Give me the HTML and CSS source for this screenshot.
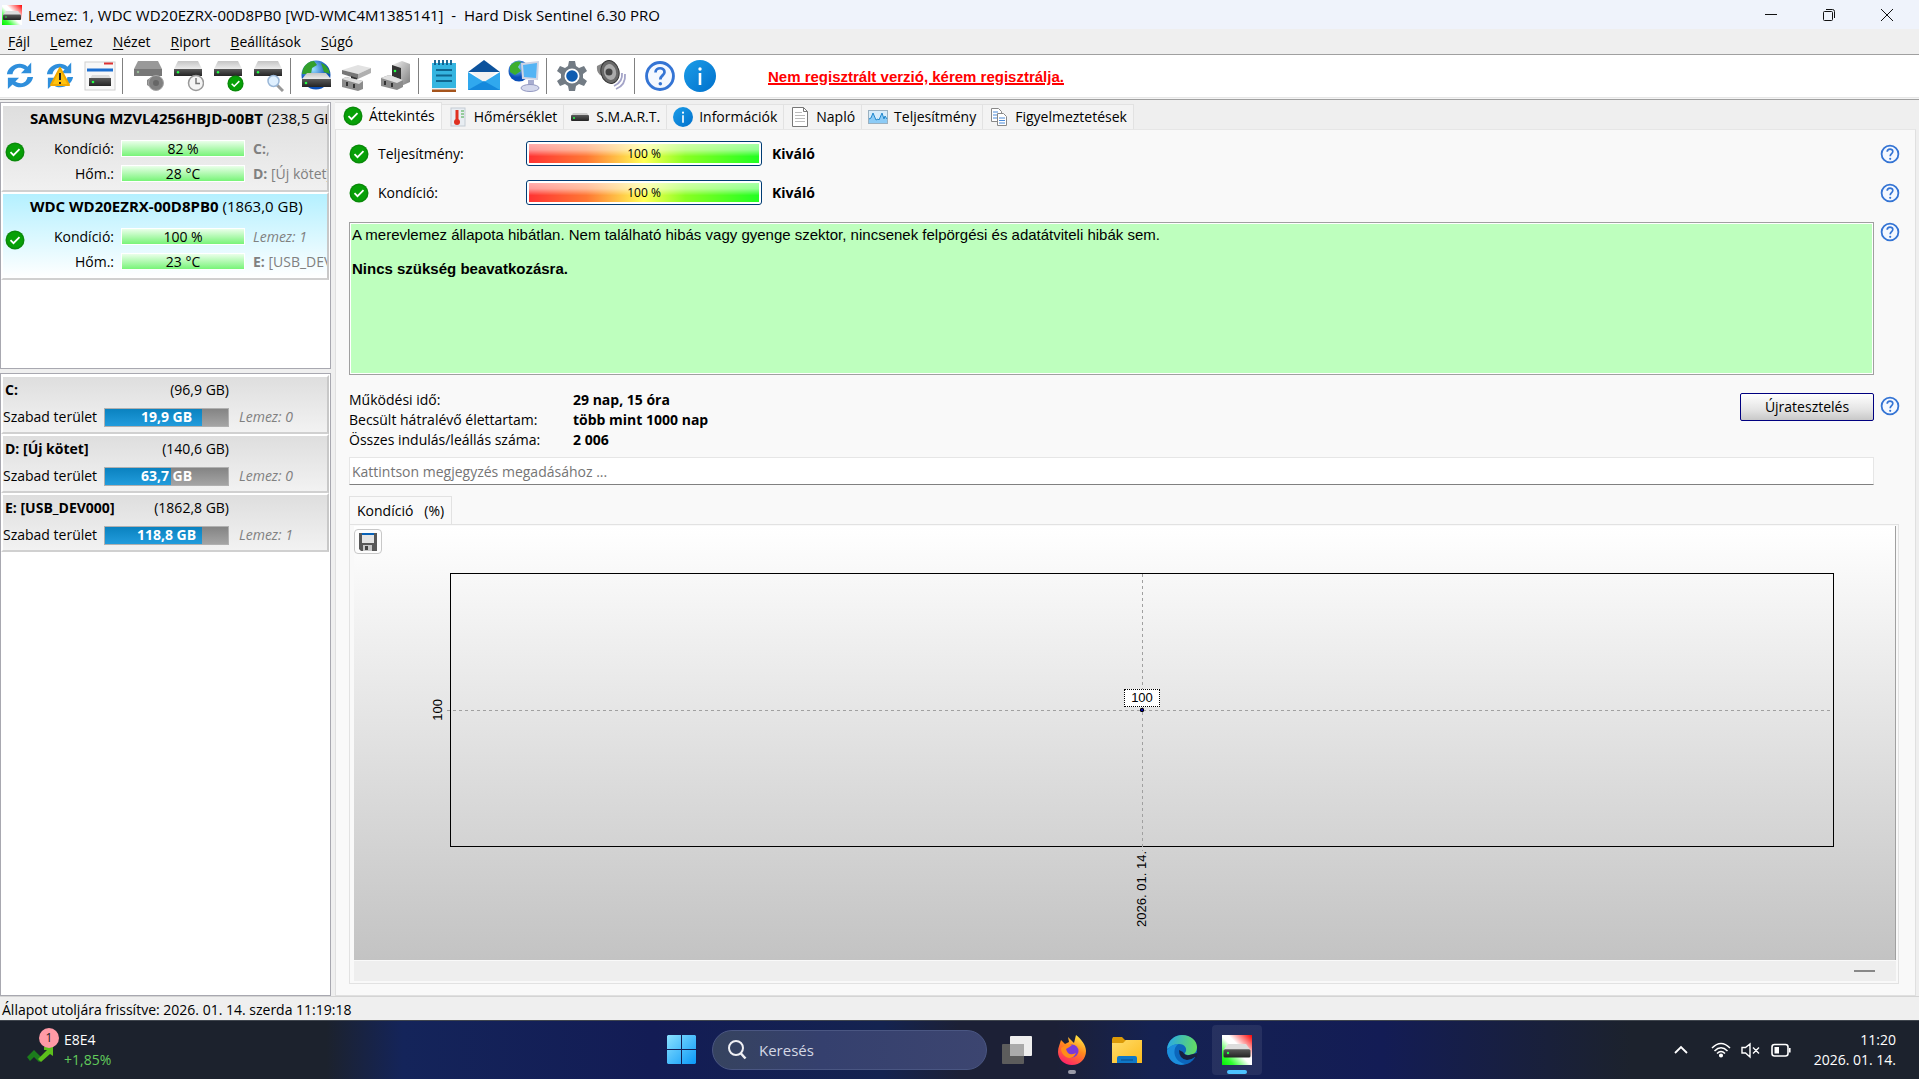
FILE: index.html
```html
<!DOCTYPE html>
<html lang="hu">
<head>
    <meta charset="UTF-8">
    <meta name="viewport" content="width=device-width, initial-scale=1.0">
    <title>Hard Disk Sentinel</title>
    <link rel="stylesheet" href="styles.css">
</head>
<body>
    <!-- Shared icons -->
    <svg class="sprite" aria-hidden="true">
        <defs>
            <linearGradient id="driveTop" x1="0" y1="0" x2="0" y2="1"><stop offset="0" stop-color="#c4c4c4"/><stop offset="1" stop-color="#ececec"/></linearGradient>
            <linearGradient id="driveFront" x1="0" y1="0" x2="0" y2="1"><stop offset="0" stop-color="#5a5a5a"/><stop offset="1" stop-color="#242424"/></linearGradient>
            <linearGradient id="appBg" x1="0" y1="1" x2="1" y2="0"><stop offset="0" stop-color="#0e0"/><stop offset=".2" stop-color="#3f3"/><stop offset=".48" stop-color="#fff"/><stop offset=".6" stop-color="#fff"/><stop offset="1" stop-color="#f00"/></linearGradient>
            <linearGradient id="blueFill" x1="0" y1="0" x2="1" y2="1"><stop offset="0" stop-color="#1c9de8"/><stop offset="1" stop-color="#0070cc"/></linearGradient>
            <linearGradient id="metal" x1="0" y1="0" x2="1" y2="1"><stop offset="0" stop-color="#f2f2f2"/><stop offset="1" stop-color="#7c7c7c"/></linearGradient>
            <radialGradient id="globeFill" cx=".4" cy=".3"><stop offset="0" stop-color="#9be0ff"/><stop offset="1" stop-color="#0a4fb8"/></radialGradient>
            <linearGradient id="winFill" x1="0" y1="0" x2="1" y2="1"><stop offset="0" stop-color="#8be2ff"/><stop offset="1" stop-color="#0a98f8"/></linearGradient>
            <linearGradient id="foxFill" x1=".8" y1="0" x2=".3" y2="1"><stop offset="0" stop-color="#fff04a"/><stop offset=".45" stop-color="#ff8a1c"/><stop offset="1" stop-color="#ff1f6b"/></linearGradient>
            <linearGradient id="edgeTop" x1="0" y1=".3" x2="1" y2=".4"><stop offset="0" stop-color="#29a8e8"/><stop offset="1" stop-color="#63dc62"/></linearGradient>
            <linearGradient id="folderFill" x1="0" y1="0" x2="1" y2="1"><stop offset="0" stop-color="#ffdc6b"/><stop offset="1" stop-color="#fcbb1c"/></linearGradient>
        </defs>
        <symbol id="ok" viewBox="0 0 20 20">
            <circle cx="10" cy="10" r="9.5" fill="#0a8a0a"/><circle cx="10" cy="10" r="8" fill="#07a007"/>
            <path d="M5.5 10.2l3 3 6-6" fill="none" stroke="#fff" stroke-width="1.8"/>
        </symbol>
        <symbol id="help" viewBox="0 0 20 20">
            <circle cx="10" cy="10" r="8.4" fill="#f4f8ff" stroke="#3474d4" stroke-width="1.8"/>
            <path d="M7.2 7.8c0-3.6 5.8-3.4 5.6-.2 0 2-2.6 2.1-2.6 4.6" fill="none" stroke="#3474d4" stroke-width="1.7"/>
            <circle cx="10.2" cy="14.8" r="1.1" fill="#3474d4"/>
        </symbol>
        <symbol id="info" viewBox="0 0 32 32">
            <circle cx="16" cy="16" r="16" fill="url(#blueFill)"/>
            <circle cx="16" cy="9" r="1.7" fill="#fff"/><path d="M16 13v12" stroke="#fff" stroke-width="2.6"/>
        </symbol>
        <symbol id="drive" viewBox="0 0 28 15">
            <path d="M4 0h20l4 8H0z" fill="url(#driveTop)"/><path d="M0 8h28v7H0z" fill="url(#driveFront)"/>
            <circle cx="4" cy="11.3" r="1.2" fill="#2f4"/>
        </symbol>
        <symbol id="app" viewBox="0 0 20 20">
            <path d="M0 0h20v20H0z" fill="url(#appBg)"/><path d="M4 6h12l3 4H1z" fill="#ddd"/>
            <rect x="1" y="9.5" width="18" height="5.500" rx="1" fill="url(#driveFront)"/><circle cx="4" cy="12" r=".8" fill="#2f4"/>
        </symbol>
        <symbol id="sync" viewBox="0 0 30 30">
            <g fill="#2f8fdc"><path d="M1 13C2 4 15-2 23 5l4-4.500V12H16l4-4C14 4 8 7 7 13z"/><path d="M29 16C28 25 15 31 7 24l-5 5V17h12l-4 4c6 4 12 1 13-5z"/></g>
        </symbol>
    </svg>

    <header class="titlebar">
        <svg class="app-icon"><use href="#app"/></svg>
        <span class="caption">Lemez: 1, WDC WD20EZRX-00D8PB0 [WD-WMC4M1385141]&nbsp; -&nbsp; Hard Disk Sentinel 6.30 PRO</span>
        <button class="win-btn" aria-label="Minimalizálás"><svg viewBox="0 0 12 12"><path d="M0 5.500h12"/></svg></button>
        <button class="win-btn" aria-label="Előző méret"><svg viewBox="0 0 12 12"><rect x=".5" y="2.500" width="9" height="9" rx="1"/><path d="M3 .5h6.500q2 0 2 2V9"/></svg></button>
        <button class="win-btn" aria-label="Bezárás"><svg viewBox="0 0 12 12"><path d="M0 0l12 12M12 0L0 12"/></svg></button>
    </header>

    <nav class="menubar">
        <button><u>F</u>ájl</button>
        <button><u>L</u>emez</button>
        <button><u>N</u>ézet</button>
        <button><u>R</u>iport</button>
        <button><u>B</u>eállítások</button>
        <button><u>S</u>úgó</button>
    </nav>

    <div class="toolbar">
        <button aria-label="Frissítés"><svg viewBox="0 0 32 32"><use href="#sync" x="2" y="2" width="28" height="28"/></svg></button>
        <button aria-label="Frissítés figyelmeztetéssel"><svg viewBox="0 0 32 32"><use href="#sync" x="2" y="2" width="28" height="28"/><path d="M16 8l9 17H7z" fill="#ffc20e" stroke="#f0a800" stroke-linejoin="round" stroke-width="2"/><path d="M16 13v7m0 2v2" stroke="#222" stroke-width="2"/></svg></button>
        <button aria-label="Ablak"><svg viewBox="0 0 32 32"><rect x="1" y="2" width="30" height="28" fill="#f8f8f8" stroke="#d0d0d0"/><path d="M3 10h26" stroke="#1d6fd0" stroke-width="3"/><path d="M20 3.500h9" stroke="#d33" stroke-width="2"/><path d="M8 15h17l2 4H6z" fill="#ddd"/><path d="M5 18h22v8H5z" fill="url(#driveFront)"/><circle cx="9" cy="22" r="1.300" fill="#2f4"/></svg></button>
        <span class="sep"></span>
        <button aria-label="Hangteszt"><svg viewBox="0 0 32 32"><path d="M6 1h20l4 8H2z" fill="#999"/><path d="M2 9h28v7H2z" fill="#777"/><circle cx="6" cy="12" r="1.200" fill="#9b9"/><path d="M15 20l6-4v13l-6-4z" fill="#888"/><circle cx="24" cy="23" r="7.500" fill="#808080" stroke="#a8a8a8"/><circle cx="24" cy="23" r="3" fill="#666"/></svg></button>
        <button aria-label="Ütemezés"><svg viewBox="0 0 32 32"><use href="#drive" x="2" y="1" width="28" height="15"/><circle cx="24" cy="23" r="7.500" fill="#f4f4f4" stroke="#999" stroke-width="1.500"/><path d="M24 18v5.500h4" fill="none" stroke="#777" stroke-width="1.500"/></svg></button>
        <button aria-label="Lemez rendben"><svg viewBox="0 0 32 32"><use href="#drive" x="2" y="1" width="28" height="15"/><use href="#ok" x="15" y="15" width="17" height="17"/></svg></button>
        <button aria-label="Lemez keresése"><svg viewBox="0 0 32 32"><use href="#drive" x="2" y="1" width="28" height="15"/><path d="M25 25l6 6" stroke="#999" stroke-width="3"/><circle cx="21.500" cy="21" r="5.500" fill="#dff0ff" stroke="#9bb8d8" stroke-width="1.500"/></svg></button>
        <span class="sep"></span>
        <button aria-label="Hálózati lemez"><svg viewBox="0 0 32 32"><circle cx="16" cy="15" r="14.500" fill="url(#globeFill)"/><path d="M3 9q4-8 11-8l3 4-5 3-1 6H2zM21 3q8 3 9 11l-6-2z" fill="#33a02c"/><path d="M7 13h19l5 6H2z" fill="url(#driveTop)"/><path d="M2 19h29v8H2z" fill="url(#driveFront)"/><circle cx="6" cy="23" r="1.300" fill="#2f4"/></svg></button>
        <button aria-label="Csatlakozó"><svg viewBox="0 0 32 32"><path d="M2 10l16-5 13 3-13 6z" fill="#e2e2e2"/><path d="M2 10l16 4v5L2 14z" fill="#777"/><path d="M18 14l13-6v5l-13 6z" fill="#b0b0b0"/><path d="M11 16l6 2v4h-6z" fill="#333"/><path d="M2 19l4-2 17 4v8l-5 2-16-4z" fill="#8c8c8c"/><path d="M2 19l4-2 17 4-4 3z" fill="#e0e0e0"/><path d="M7 22v4M14 24v4" stroke="#333" stroke-width="2"/></svg></button>
        <button aria-label="Dokkoló"><svg viewBox="0 0 32 32"><path d="M12 5l10-4 8 3v18l-9 4-9-6z" fill="url(#metal)"/><path d="M12 5l9 3v12l-9-4z" fill="#333"/><circle cx="15" cy="11" r="1.300" fill="#2f4"/><path d="M1 18l8-3 14 5v7l-6 3-16-4z" fill="#8c8c8c"/><path d="M1 18l8-3 14 5-6 3z" fill="#e0e0e0"/><path d="M5 21v4M12 23v4" stroke="#333" stroke-width="2"/></svg></button>
        <span class="sep"></span>
        <button aria-label="Jegyzet"><svg viewBox="0 0 32 32"><path d="M4 3h24v26H4z" fill="#35b5e0"/><path d="M4 29h24v3H4z" fill="#a5541c"/><path d="M4 28h24v1.500H4z" fill="#eee"/><path d="M7 0v5m4-5v5m4-5v5m4-5v5m4-5v5" stroke="#0b5c8c" stroke-width="1.800"/><path d="M8 10h16M8 15.500h16M8 21h16" stroke="#0f668f" stroke-width="1.800"/></svg></button>
        <button aria-label="E-mail"><svg viewBox="0 0 32 32"><path d="M0 12L16 0l16 12z" fill="#0c529c"/><path d="M4 12h24L16 24z" fill="#f2f2f2"/><path d="M0 12l16 10 16-10v18H0z" fill="#30a8ee"/><path d="M0 30l16-9 16 9z" fill="#1488dc"/></svg></button>
        <button aria-label="Hálózat"><svg viewBox="0 0 32 32"><circle cx="11" cy="11" r="10.500" fill="url(#globeFill)"/><path d="M2 6q5-6 11-4l-3 5 3 4-6 4-5-3z" fill="#3caf2f"/><path d="M13 3l18-2-1 19-16-1z" fill="#d0d4e4"/><path d="M15 5l14-2-1 15-12-1z" fill="#54b4f4"/><path d="M20 20h6v5h-6z" fill="#a8aed0"/><ellipse cx="22" cy="28" rx="9" ry="3.500" fill="#d4d8ec" stroke="#9298c0"/></svg></button>
        <span class="sep"></span>
        <button aria-label="Beállítások"><svg viewBox="0 0 32 32"><path d="M13 1h6l1 5 3 2 5-2 3 5-4 3v4l4 3-3 5-5-2-3 2-1 5h-6l-1-5-3-2-5 2-3-5 4-3v-4l-4-3 3-5 5 2 3-2z" fill="#727b84"/><circle cx="16" cy="16" r="7.500" fill="#fff"/><circle cx="16" cy="16" r="5.800" fill="#0f5cb0"/></svg></button>
        <button aria-label="Hang"><svg viewBox="0 0 32 32"><path d="M1 6l6-3 5 1v14l-8-3q-4-4-3-9z" fill="#888"/><ellipse cx="14" cy="12" rx="9" ry="11.500" transform="rotate(-14 14 12)" fill="#686868" stroke="#333"/><ellipse cx="14" cy="12" rx="6" ry="8" transform="rotate(-14 14 12)" fill="#aaa"/><circle cx="13" cy="12" r="3.500" fill="#444"/><path d="M26 13q1 9-8 13M29 14q1 11-9 15" fill="none" stroke="#a4a4c8" stroke-width="1.800"/></svg></button>
        <span class="sep"></span>
        <button aria-label="Súgó"><svg viewBox="0 0 32 32"><use href="#help" width="32" height="32"/></svg></button>
        <button aria-label="Névjegy"><svg viewBox="0 0 32 32"><use href="#info" width="32" height="32"/></svg></button>
        <a class="register" href="#">Nem regisztrált verzió, kérem regisztrálja.</a>
    </div>

    <main class="workspace">
        <aside class="sidebar">
            <ul class="list disks">
                <li class="disk">
                    <div class="disk-name"><b>SAMSUNG MZVL4256HBJD-00BT</b> (238,5 GB)</div>
                    <svg class="state"><use href="#ok"/></svg>
                    <span class="label">Kondíció:</span><span class="meter">82 %</span><span class="vol"><b>C:</b>,</span>
                    <span class="label">Hőm.:</span><span class="meter">28 °C</span><span class="vol"><b>D:</b> [Új kötet]</span>
                </li>
                <li class="disk selected">
                    <div class="disk-name"><b>WDC WD20EZRX-00D8PB0</b> (1863,0 GB)</div>
                    <svg class="state"><use href="#ok"/></svg>
                    <span class="label">Kondíció:</span><span class="meter">100 %</span><span class="vol"><i>Lemez: 1</i></span>
                    <span class="label">Hőm.:</span><span class="meter">23 °C</span><span class="vol"><b>E:</b> [USB_DEV000]</span>
                </li>
            </ul>
            <ul class="list volumes">
                <li class="volume">
                    <div class="volume-head"><b>C:</b><span>(96,9 GB)</span></div>
                    <div class="volume-space"><span>Szabad terület</span><span class="space"><span class="used" style="width: 79%"></span><b>19,9 GB</b></span><i>Lemez: 0</i></div>
                </li>
                <li class="volume">
                    <div class="volume-head"><b>D: [Új kötet]</b><span>(140,6 GB)</span></div>
                    <div class="volume-space"><span>Szabad terület</span><span class="space"><span class="used" style="width: 54%"></span><b>63,7 GB</b></span><i>Lemez: 0</i></div>
                </li>
                <li class="volume">
                    <div class="volume-head"><b>E: [USB_DEV000]</b><span>(1862,8 GB)</span></div>
                    <div class="volume-space"><span>Szabad terület</span><span class="space"><span class="used" style="width: 79%"></span><b>118,8 GB</b></span><i>Lemez: 1</i></div>
                </li>
            </ul>
        </aside>

        <section class="details">
            <div class="tabs" role="tablist">
                <button class="tab active" role="tab" aria-selected="true"><svg><use href="#ok"/></svg>Áttekintés</button>
                <button class="tab" role="tab"><svg viewBox="0 0 20 20"><rect x="3" y="1" width="14" height="18" fill="#e8edf2" stroke="#c4ccd4"/><path d="M9 3v10" stroke="#e03020" stroke-width="3"/><circle cx="9" cy="15" r="3" fill="#e03020"/><path d="M13 4h3m-3 3h3m-3 3h3" stroke="#4a4"/></svg>Hőmérséklet</button>
                <button class="tab" role="tab"><svg viewBox="0 0 20 20"><path d="M3 6h14l2 3H1z" fill="#ccc"/><rect x="1" y="8" width="18" height="6" rx="1" fill="url(#driveFront)"/><circle cx="4" cy="11" r="1" fill="#2f4"/></svg>S.M.A.R.T.</button>
                <button class="tab" role="tab"><svg><use href="#info"/></svg>Információk</button>
                <button class="tab" role="tab"><svg viewBox="0 0 20 20"><path d="M2.500 .5h11l4 4v15h-15z" fill="#fff" stroke="#777"/><path d="M13.500 .5v4h4" fill="none" stroke="#777"/><path d="M5 5.500h7M5 8.500h10M5 11.500h10M5 14.500h10" stroke="#bbb"/></svg>Napló</button>
                <button class="tab" role="tab"><svg viewBox="0 0 20 20"><rect x=".5" y="3.500" width="19" height="13" fill="#d8ecfa" stroke="#9ab0c0"/><path d="M1 12l2-1 2-5 3 7 2-1 1 1 3-7 2 6 1-3 2 3v4H1z" fill="#8ccbf6"/><path d="M1 12l2-1 2-5 3 7 2-1 1 1 3-7 2 6 1-3 2 3" fill="none" stroke="#2288cc"/></svg>Teljesítmény</button>
                <button class="tab" role="tab"><svg viewBox="0 0 20 20"><g fill="#fff" stroke="#888"><path d="M2.500 1.500h7l3 3v10h-10z"/><path d="M8.500 6.500h6l3 3v9h-9z"/></g><path d="M4 5h5M4 8h4M4 11h4M10 11h6M10 13.500h6M10 16h6" stroke="#4a8ad8"/></svg>Figyelmeztetések</button>
            </div>

            <div class="page">
                <div class="rating">
                    <svg class="icon"><use href="#ok"/></svg><span>Teljesítmény:</span>
                    <div class="gauge"><div class="gauge-fill" style="width: 100%">100 %</div></div>
                    <b>Kiváló</b>
                    <button class="help" aria-label="Súgó"><svg class="icon"><use href="#help"/></svg></button>
                </div>
                <div class="rating">
                    <svg class="icon"><use href="#ok"/></svg><span>Kondíció:</span>
                    <div class="gauge"><div class="gauge-fill" style="width: 100%">100 %</div></div>
                    <b>Kiváló</b>
                    <button class="help" aria-label="Súgó"><svg class="icon"><use href="#help"/></svg></button>
                </div>

                <div class="with-help">
                    <div class="verdict">
                        <p>A merevlemez állapota hibátlan. Nem található hibás vagy gyenge szektor, nincsenek felpörgési és adatátviteli hibák sem.</p>
                        <p><b>Nincs szükség beavatkozásra.</b></p>
                    </div>
                    <button class="help" aria-label="Súgó"><svg class="icon"><use href="#help"/></svg></button>
                </div>

                <div class="with-help stats-row">
                    <dl class="stats">
                        <dt>Működési idő:</dt><dd>29 nap, 15 óra</dd>
                        <dt>Becsült hátralévő élettartam:</dt><dd>több mint 1000 nap</dd>
                        <dt>Összes indulás/leállás száma:</dt><dd>2 006</dd>
                    </dl>
                    <button class="retest">Újratesztelés</button>
                    <button class="help" aria-label="Súgó"><svg class="icon"><use href="#help"/></svg></button>
                </div>

                <input class="comment" type="text" aria-label="Megjegyzés" placeholder="Kattintson megjegyzés megadásához ...">

                <div class="chart-tabs"><button class="chart-tab">Kondíció&nbsp;&nbsp; (%)</button></div>
                <div class="chart-panel">
                    <div class="chart">
                        <button class="save" aria-label="Mentés"><svg viewBox="0 0 18 18"><path d="M0 0h18v18H2l-2-2z" fill="#585858"/><path d="M3 0h12v10H3z" fill="#e4e4e4"/><path d="M3 0h12v2H3z" fill="#0862b8"/><path d="M4 12h9v6H4z" fill="#c8c8c8"/><path d="M6 13h3v4H6z" fill="#444"/></svg></button>
                        <span class="y-label">100</span>
                        <div class="plot">
                            <span class="h-line"></span>
                            <span class="v-line"></span>
                            <span class="point-label">100</span>
                            <span class="point"></span>
                        </div>
                        <span class="x-label">2026. 01. 14.</span>
                    </div>
                    <div class="track"><span class="thumb"></span></div>
                </div>
            </div>
        </section>
    </main>

    <div class="statusbar">Állapot utoljára frissítve: 2026. 01. 14. szerda 11:19:18</div>

    <footer class="taskbar">
        <button class="widget">
            <span class="widget-icon">
                <svg viewBox="0 0 28 16"><path d="M1 10l7-7 5 5 4 4-4 3-5-5-4 4z" fill="#1c7d1c"/><path d="M12 12l9-9h-3V0h9v9l-3-2-9 8z" fill="#5cbf1c"/></svg>
                <span class="badge">1</span>
            </span>
            <span class="quote"><span>E8E4</span><span class="up">+1,85%</span></span>
        </button>
        <div class="task-center">
            <button class="task" aria-label="Start"><svg viewBox="0 0 30 30"><path d="M0 1l1-1h13v14H0zM15 0h13l1 1v13H15zM0 15h14v14H1l-1-1zM15 15h14v13l-1 1H15z" fill="url(#winFill)"/></svg></button>
            <label class="search">
                <svg viewBox="0 0 20 20"><circle cx="9" cy="8" r="7" fill="none" stroke="#f0f0f4" stroke-width="2"/><path d="M13.500 13l5 5.500" stroke="#f0f0f4" stroke-width="2.500"/></svg>
                <input type="text" placeholder="Keresés" aria-label="Keresés">
            </label>
            <button class="task" aria-label="Feladatnézet"><svg viewBox="0 0 30 30"><rect y="9" width="22" height="20" rx="1" fill="#5c5c5c"/><rect x="8" y="1" width="22" height="20" rx="1" fill="#eee"/><path d="M8 9h14v12H8z" fill="#aaa"/></svg></button>
            <button class="task" aria-label="Firefox"><svg viewBox="0 0 30 30"><path d="M4 5l4 4 4-2-1-5 6 6 2-8c5 4 10 10 10 16 0 8-6 14-14 14S1 24 1 17C1 12 3 9 4 5z" fill="url(#foxFill)"/><circle cx="15" cy="16" r="6.500" fill="#7a3ad8"/><path d="M4 13q5-4 11-3-2 2-6 4 2 8 10 4-3 7-10 4-5-3-5-9z" fill="#ff8c1a"/></svg><span class="mark"></span></button>
            <button class="task" aria-label="Fájlkezelő"><svg viewBox="0 0 30 30"><path d="M0 4l1-2h9l3 3h16v10H0z" fill="#dc9a08"/><path d="M0 8h11l3-3h16v23H0z" fill="url(#folderFill)"/><path d="M5 28v-5q0-2 2-2h16q2 0 2 2v5z" fill="#0f78c8"/><path d="M9 25h12" stroke="#0a4a88"/></svg></button>
            <button class="task" aria-label="Edge"><svg viewBox="0 0 30 30"><circle cx="15" cy="15" r="15" fill="#0c66bc"/><path d="M0 14C1 5 8 0 15 0c9 0 15 6 15 12 0 5-3 8-8 8-3 0-5-1-4-2 3-4 0-9-6-9-5 0-9 3-12 5z" fill="url(#edgeTop)"/><path d="M0 15q4-6 11-6c-6 5-5 17 7 20C8 32 0 24 0 15z" fill="#1c8edc"/><path d="M12 15q0 9 8 10 4 0 8-3l2 1v-5l-4 1q-8 3-10-2z" fill="#181f40"/></svg></button>
            <button class="task running" aria-label="Hard Disk Sentinel"><svg><use href="#app"/></svg><span class="mark"></span></button>
        </div>
        <div class="tray">
            <button class="tray-more" aria-label="Rejtett ikonok"><svg viewBox="0 0 20 20"><path d="M4 13l6-6 6 6" fill="none" stroke="#fff" stroke-width="1.800"/></svg></button>
            <svg viewBox="0 0 20 20" fill="none" stroke="#fff" stroke-width="1.500"><path d="M1 8q9-9 18 0M3.500 11q6.500-6.500 13 0M6 13.500q4-4 8 0"/><circle cx="10" cy="15.500" r="1.300" fill="#fff"/></svg>
            <svg viewBox="0 0 20 20" fill="none" stroke="#fff" stroke-width="1.400"><path d="M1 7.500h3.500L9 4v13l-4.500-4H1zM12 7.500l6 6M18 7.500l-6 6"/></svg>
            <svg viewBox="0 0 20 20" fill="none" stroke="#fff" stroke-width="1.600"><rect x="1" y="4.500" width="16" height="11.500" rx="2.500"/><path d="M3.500 7h4.500v6.500H3.500z" fill="#fff" stroke="none"/><path d="M18.800 8v4.500"/></svg>
            <time class="clock"><span>11:20</span><span>2026. 01. 14.</span></time>
        </div>
    </footer>
</body>
</html>
```
FILE: styles.css
```css
* {
    box-sizing: border-box;
}

body {
    margin: 0;
    min-height: 100vh;
    display: flex;
    flex-direction: column;
    background: #efefef;
    color: #000;
    font-family: "Open Sans", "Noto Sans", sans-serif;
    font-size: 14px;
    line-height: 20px;
}

button,
input {
    font: inherit;
    color: inherit;
    border: none;
    background: none;
    padding: 0;
}

svg {
    display: block;
    flex: none;
}

ul,
dl,
dd,
p {
    margin: 0;
    padding: 0;
    list-style: none;
}

.sprite {
    position: absolute;
    width: 0;
    height: 0;
}

.icon {
    width: 20px;
    height: 20px;
}

/* Title and menu */
.titlebar {
    display: flex;
    align-items: center;
    height: 29px;
    padding: 0 3px 0 2px;
    background: #eff3fb;
}

.app-icon {
    width: 20px;
    height: 20px;
    margin-right: 6px;
}

.caption {
    flex: 1;
    font-size: 15px;
}

.win-btn {
    width: 58px;
    height: 28px;
    display: flex;
    align-items: center;
    justify-content: center;
}

.win-btn svg {
    width: 12px;
    height: 12px;
    fill: none;
    stroke: #111;
    overflow: visible;
}

.menubar {
    display: flex;
    gap: 20px;
    height: 25px;
    padding: 0 8px;
}

.menubar u {
    text-underline-offset: 2px;
}

/* Toolbar */
.toolbar {
    display: flex;
    align-items: center;
    height: 46px;
    padding-bottom: 2px;
    border-top: 1px solid #a0a0a0;
    border-bottom: 1px solid #a0a0a0;
    background: linear-gradient(#fff 42px, #d8d8d8 42px, #f4f4f4 43px);
}

.toolbar button {
    width: 40px;
    height: 40px;
    display: flex;
    align-items: center;
    justify-content: center;
}

.toolbar button svg {
    width: 32px;
    height: 32px;
}

.sep {
    width: 8px;
    height: 36px;
    background: linear-gradient(#808080, #808080) 2px 0 / 1px 100% no-repeat;
}

.register {
    margin-left: 48px;
    color: #f00;
    font: bold 15px "Liberation Sans", Arial, sans-serif;
    text-decoration-thickness: 2px;
}

/* Left side */
.workspace {
    flex: 1;
    display: flex;
    gap: 4px;
    padding: 2px 3px 0 0;
}

.sidebar {
    width: 331px;
    flex: none;
    display: flex;
    flex-direction: column;
    gap: 4px;
}

.list {
    border: 1px solid #a8a8b0;
    background: #fff;
    padding: 1px 1px 1px 0;
}

.disks {
    height: 267px;
}

.volumes {
    flex: 1;
}

.disk {
    display: grid;
    grid-template-columns: 24px 88px 124px 1fr;
    grid-template-rows: 30px 25px 25px;
    align-items: center;
    column-gap: 3px;
    height: 88px;
    overflow: hidden;
    white-space: nowrap;
    background: linear-gradient(#dedede, #f0f0f0);
    border: 2px solid;
    border-color: #fff #c8c8c8 #d0d0d0 #fff;
}

.disk.selected {
    background: linear-gradient(#b4f0ff, #fff);
}

.disk-name {
    grid-column: 1 / -1;
    align-self: start;
    padding: 2px 0 0 27px;
    overflow: hidden;
    font-size: 15px;
}

.state {
    grid-row: 2 / 4;
    width: 20px;
    height: 20px;
    margin: -18px 0 0 2px;
}

.label {
    text-align: right;
    padding-right: 4px;
}

.meter {
    height: 17px;
    line-height: 16px;
    text-align: center;
    background: linear-gradient(#eaffea, #78f478);
    border: 1px solid #fff;
}

.vol {
    overflow: hidden;
    padding-left: 5px;
    color: #808080;
}

.volume {
    height: 59px;
    padding-top: 3px;
    background: linear-gradient(#dedede, #f2f2f2);
    border: 2px solid;
    border-color: #fff #c8c8c8 #d0d0d0 #fff;
}

.volume-head {
    display: flex;
    justify-content: space-between;
    width: 226px;
    padding-left: 2px;
}

.volume-space {
    display: flex;
    align-items: center;
    height: 34px;
}

.volume-space > span:first-child {
    width: 101px;
    flex: none;
}

.volume-space i {
    margin-left: 10px;
    color: #808080;
}

.space {
    position: relative;
    width: 125px;
    height: 19px;
    border: 1px solid #b0b0b0;
    background: linear-gradient(#848484, #a4a4a4);
    color: #fff;
    line-height: 16px;
    text-align: center;
}

.space b {
    position: relative;
}

.used {
    position: absolute;
    inset: 0 auto 0 0;
    background: linear-gradient(#0a82c0, #229cdc);
}

/* Right side */
.details {
    flex: 1;
    min-width: 0;
    display: flex;
    flex-direction: column;
}

.tabs {
    display: flex;
    align-items: flex-end;
    height: 27px;
}

.tab {
    display: flex;
    align-items: center;
    gap: 6px;
    height: 25px;
    padding: 0 6px;
    background: #f3f3f3;
    border: 1px solid #e2e2e2;
    border-width: 1px 1px 0 0;
    white-space: nowrap;
}

.tab svg {
    width: 20px;
    height: 20px;
}

.tab.active {
    height: 27px;
    padding-left: 8px;
    background: #f9f9f9;
}

.page {
    flex: 1;
    display: flex;
    flex-direction: column;
    padding: 4px 15px 11px 13px;
    background: #f9f9f9;
    border: 1px solid #e0e0e0;
    border-top-color: #e6e6e6;
}

.rating {
    display: grid;
    grid-template-columns: 20px 157px 236px 1fr 20px;
    align-items: center;
    height: 39px;
}

.rating span {
    padding-left: 9px;
}

.rating b {
    padding-left: 10px;
}

.gauge {
    height: 25px;
    padding: 2px;
    border: 1px solid #003c74;
    border-radius: 3px;
    background: #fff;
}

.gauge-fill {
    height: 19px;
    text-align: center;
    font-size: 12px;
    background:
        linear-gradient(rgba(255, 255, 255, .6), rgba(255, 255, 255, .5) 30%, rgba(255, 255, 255, 0) 65%),
        linear-gradient(90deg, #f33, #f73 25%, #ff5 50%, #8f2 68%, #2f2);
}

.help {
    width: 20px;
    height: 20px;
    flex: none;
}

.with-help {
    display: flex;
    gap: 6px;
    margin-top: 10px;
}

.verdict {
    flex: 1;
    height: 153px;
    padding: 3px 2px;
    background: #beffbe;
    border: 1px solid #a0a0a0;
    outline: 1px solid #fff;
    outline-offset: -2px;
    font: 15px/17px "Liberation Sans", Arial, sans-serif;
}

.verdict p {
    margin-bottom: 17px;
}

.stats-row {
    margin-top: 15px;
}

.stats {
    flex: 1;
    display: grid;
    grid-template-columns: 224px 1fr;
}

.stats dd {
    font-weight: bold;
}

.retest {
    width: 134px;
    height: 28px;
    margin-top: 3px;
    border: 1px solid #000080;
    border-radius: 2px;
    background: linear-gradient(#fff, #e4e4e4 60%, #c8c8c8);
}

.stats-row .help {
    margin-top: 6px;
}

.comment {
    height: 28px;
    margin: 7px 26px 0 0;
    padding: 0 2px;
    background: #fff;
    border: 1px solid #e6e6e6;
    border-bottom-color: #808080;
}

.comment::placeholder {
    color: #757575;
    opacity: 1;
}

/* Chart */
.chart-tabs {
    margin-top: 11px;
}

.chart-tab {
    display: block;
    height: 28px;
    padding: 0 7px;
    background: #f9f9f9;
    border: 1px solid #e2e2e2;
    border-bottom: none;
}

.chart-panel {
    flex: 1;
    display: flex;
    flex-direction: column;
    margin-right: 1px;
    padding: 1px 2px 2px 4px;
    border: 1px solid #e2e2e2;
}

.chart {
    flex: 1;
    position: relative;
    display: grid;
    grid-template-columns: 96px 1fr;
    grid-template-rows: 1fr 113px;
    padding: 47px 61px 0 0;
    background: linear-gradient(#fff, #c3c3c3);
    border-right: 1px solid #a0a0a0;
    font: 13px/16px "Liberation Sans", Arial, sans-serif;
}

.save {
    position: absolute;
    top: 3px;
    left: 0;
    width: 28px;
    height: 25px;
    display: flex;
    align-items: center;
    justify-content: center;
    background: #fdfdfd;
    border: 1px solid #c8c8c8;
    border-radius: 4px;
}

.save svg {
    width: 18px;
    height: 18px;
}

.y-label,
.x-label {
    writing-mode: vertical-rl;
    transform: rotate(180deg);
}

.y-label {
    place-self: center end;
    margin-right: 4px;
}

.x-label {
    grid-column: 2;
    justify-self: center;
    align-self: start;
    margin-top: 4px;
}

.plot {
    position: relative;
    border: 1px solid #000;
}

.h-line,
.v-line {
    position: absolute;
}

.h-line {
    top: 50%;
    left: -4px;
    right: 0;
    height: 1px;
    background: repeating-linear-gradient(90deg, #a0a0a0 0 3px, transparent 3px 6px);
}

.v-line {
    left: 50%;
    top: 0;
    bottom: -5px;
    width: 1px;
    background: repeating-linear-gradient(#a0a0a0 0 3px, transparent 3px 6px);
}

.point-label,
.point {
    position: absolute;
    left: 50%;
    transform: translateX(-50%);
}

.point-label {
    bottom: calc(50% + 3px);
    width: 36px;
    border: 1px dotted #000;
    background: #fff;
    text-align: center;
}

.point {
    top: calc(50% - 2px);
    width: 4px;
    height: 4px;
    background: #00a;
    border: 1px solid #000;
    border-radius: 1px;
}

.track {
    display: flex;
    align-items: center;
    justify-content: flex-end;
    height: 20px;
    margin-top: 1px;
    padding-right: 21px;
    background: #eee;
}

.thumb {
    width: 21px;
    height: 2px;
    background: #888;
}

.statusbar {
    height: 24px;
    padding: 3px 2px;
    border-top: 1px solid #d4d4d4;
}

/* Windows taskbar */
.taskbar {
    display: grid;
    grid-template-columns: 1fr auto 1fr;
    align-items: center;
    height: 59px;
    color: #fff;
    background: linear-gradient(90deg, #1c222d 17%, #14245a 21%, #131c55 34%, #142350 46%, #1c2036 50%, #1c2036 55%, #152252 60%, #131c55 72%, #1c222d 85%);
    border-top: 1px solid #40464e;
}

.widget {
    display: flex;
    align-items: center;
    gap: 10px;
    padding-left: 26px;
}

.widget-icon {
    position: relative;
    padding-top: 10px;
}

.widget-icon svg {
    width: 28px;
    height: 16px;
}

.badge {
    position: absolute;
    top: -9px;
    right: -5px;
    width: 20px;
    height: 20px;
    border-radius: 50%;
    background: #ff9aa6;
    color: #222;
    font-size: 12px;
}

.quote,
.clock {
    display: flex;
    flex-direction: column;
    text-align: left;
}

.up {
    color: #62cc5c;
}

.task-center {
    display: flex;
    align-items: center;
    gap: 5px;
}

.task {
    position: relative;
    width: 50px;
    height: 50px;
    display: flex;
    align-items: center;
    justify-content: center;
    border-radius: 4px;
}

.task svg {
    width: 30px;
    height: 30px;
}

.mark {
    position: absolute;
    bottom: 1px;
    width: 8px;
    height: 4px;
    border-radius: 2px;
    background: #9a9aa8;
}

.running {
    background: rgba(255, 255, 255, .08);
}

.running .mark {
    width: 20px;
    background: #4cc2ff;
}

.search {
    display: flex;
    align-items: center;
    gap: 12px;
    width: 275px;
    height: 40px;
    padding: 0 14px;
    border: 1px solid #4a5682;
    border-radius: 20px;
    background: linear-gradient(90deg, #36435f, #35406e 40%, #3c4570);
}

.search svg {
    width: 20px;
    height: 20px;
}

.search input {
    flex: 1;
    min-width: 0;
    font-size: 15px;
}

.search input::placeholder {
    color: #d4d8e4;
    opacity: 1;
}

.tray {
    display: flex;
    justify-content: flex-end;
    align-items: center;
    gap: 10px;
    padding-right: 23px;
}

.tray svg {
    width: 20px;
    height: 20px;
}

.tray-more {
    margin-right: 10px;
}

.clock {
    margin-left: 13px;
    text-align: right;
}
```
